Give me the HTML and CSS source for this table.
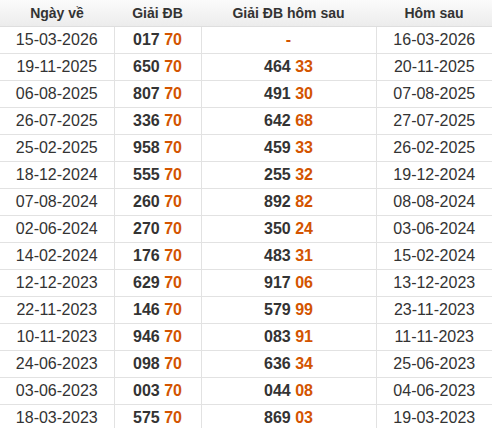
FILE: index.html
```html
<!DOCTYPE html>
<html>
<head>
<meta charset="utf-8">
<link rel="stylesheet" href="styles.css">
</head>
<body>
<table class="kq">
<colgroup><col class="c1"><col class="c2"><col class="c3"><col class="c4"></colgroup>
<thead>
<tr><th>Ngày về</th><th>Giải ĐB</th><th>Giải ĐB hôm sau</th><th>Hôm sau</th></tr>
</thead>
<tbody>
<tr><td>15-03-2026</td><td class="n">017 <span class="o">70</span></td><td class="n"><span class="o">-</span></td><td>16-03-2026</td></tr>
<tr><td>19-11-2025</td><td class="n">650 <span class="o">70</span></td><td class="n">464 <span class="o">33</span></td><td>20-11-2025</td></tr>
<tr><td>06-08-2025</td><td class="n">807 <span class="o">70</span></td><td class="n">491 <span class="o">30</span></td><td>07-08-2025</td></tr>
<tr><td>26-07-2025</td><td class="n">336 <span class="o">70</span></td><td class="n">642 <span class="o">68</span></td><td>27-07-2025</td></tr>
<tr><td>25-02-2025</td><td class="n">958 <span class="o">70</span></td><td class="n">459 <span class="o">33</span></td><td>26-02-2025</td></tr>
<tr><td>18-12-2024</td><td class="n">555 <span class="o">70</span></td><td class="n">255 <span class="o">32</span></td><td>19-12-2024</td></tr>
<tr><td>07-08-2024</td><td class="n">260 <span class="o">70</span></td><td class="n">892 <span class="o">82</span></td><td>08-08-2024</td></tr>
<tr><td>02-06-2024</td><td class="n">270 <span class="o">70</span></td><td class="n">350 <span class="o">24</span></td><td>03-06-2024</td></tr>
<tr><td>14-02-2024</td><td class="n">176 <span class="o">70</span></td><td class="n">483 <span class="o">31</span></td><td>15-02-2024</td></tr>
<tr><td>12-12-2023</td><td class="n">629 <span class="o">70</span></td><td class="n">917 <span class="o">06</span></td><td>13-12-2023</td></tr>
<tr><td>22-11-2023</td><td class="n">146 <span class="o">70</span></td><td class="n">579 <span class="o">99</span></td><td>23-11-2023</td></tr>
<tr><td>10-11-2023</td><td class="n">946 <span class="o">70</span></td><td class="n">083 <span class="o">91</span></td><td>11-11-2023</td></tr>
<tr><td>24-06-2023</td><td class="n">098 <span class="o">70</span></td><td class="n">636 <span class="o">34</span></td><td>25-06-2023</td></tr>
<tr><td>03-06-2023</td><td class="n">003 <span class="o">70</span></td><td class="n">044 <span class="o">08</span></td><td>04-06-2023</td></tr>
<tr><td>18-03-2023</td><td class="n">575 <span class="o">70</span></td><td class="n">869 <span class="o">03</span></td><td>19-03-2023</td></tr>
</tbody>
</table>
</body>
</html>
```
FILE: styles.css
```css
html, body {
  margin: 0;
  padding: 0;
  background: #fff;
}
body {
  font-family: "Liberation Sans", Arial, sans-serif;
  color: #333;
}
.kq {
  width: 492px;
  border-collapse: collapse;
  table-layout: fixed;
}
.c1 { width: 114px; }
.c2 { width: 87px; }
.c3 { width: 175px; }
.c4 { width: 116px; }
.kq th {
  height: 26px;
  padding: 0;
  font-size: 14px;
  font-weight: bold;
  color: #333;
  text-align: center;
  background: linear-gradient(#fbfbfb, #ececec);
  border-bottom: 1px solid #dedede;
}
.kq td {
  height: 26px;
  padding: 0;
  font-size: 16px;
  text-align: center;
  border: 1px solid #e2e2e2;
  border-top: none;
}
.kq td:first-child { border-left: none; }
.kq td:last-child { border-right: none; }
.kq td.n { font-weight: bold; }
.o { color: #d35400; }
```
